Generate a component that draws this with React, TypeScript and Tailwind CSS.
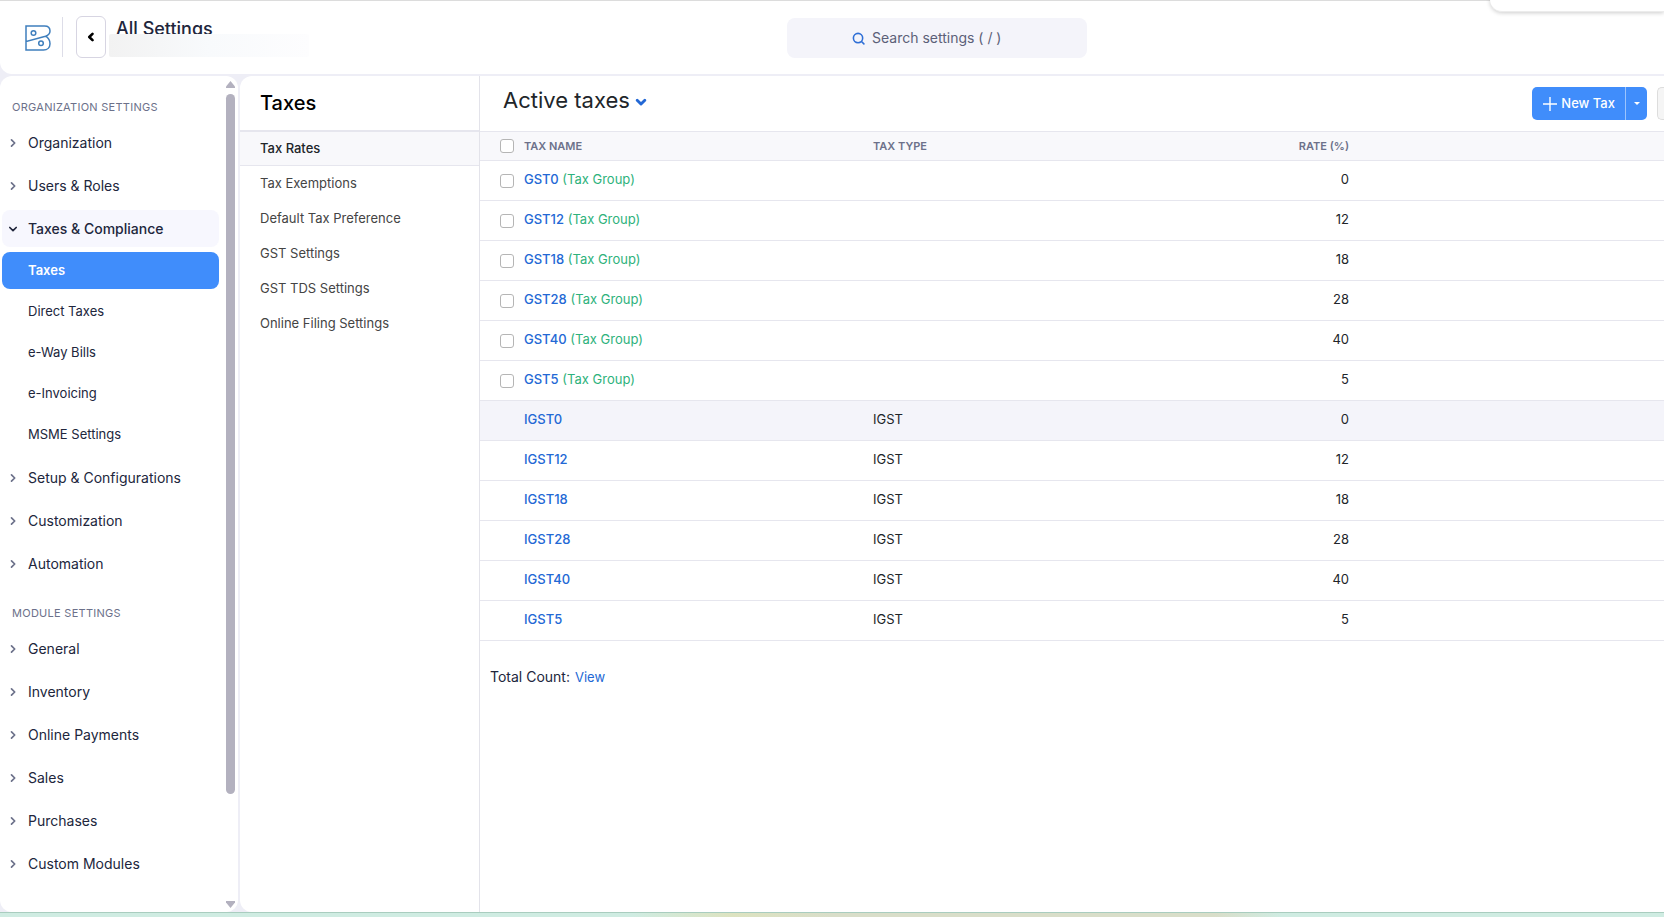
import { useState } from "react";
import clsx from "clsx";

type NavItem = { label: string; children?: string[] };

const orgSettings: NavItem[] = [
  { label: "Organization" },
  { label: "Users & Roles" },
  {
    label: "Taxes & Compliance",
    children: ["Taxes", "Direct Taxes", "e-Way Bills", "e-Invoicing", "MSME Settings"],
  },
  { label: "Setup & Configurations" },
  { label: "Customization" },
  { label: "Automation" },
];

const moduleSettings: NavItem[] = [
  { label: "General" },
  { label: "Inventory" },
  { label: "Online Payments" },
  { label: "Sales" },
  { label: "Purchases" },
  { label: "Custom Modules" },
];

const taxMenu = [
  "Tax Rates",
  "Tax Exemptions",
  "Default Tax Preference",
  "GST Settings",
  "GST TDS Settings",
  "Online Filing Settings",
];

const taxes = [
  { name: "GST0", group: true, rate: 0 },
  { name: "GST12", group: true, rate: 12 },
  { name: "GST18", group: true, rate: 18 },
  { name: "GST28", group: true, rate: 28 },
  { name: "GST40", group: true, rate: 40 },
  { name: "GST5", group: true, rate: 5 },
  { name: "IGST0", type: "IGST", rate: 0 },
  { name: "IGST12", type: "IGST", rate: 12 },
  { name: "IGST18", type: "IGST", rate: 18 },
  { name: "IGST28", type: "IGST", rate: 28 },
  { name: "IGST40", type: "IGST", rate: 40 },
  { name: "IGST5", type: "IGST", rate: 5 },
];

function Logo() {
  return (
    <svg viewBox="0 0 26 26" className="w-[26px] h-[26px]" fill="none" stroke="#3f7fbd" strokeWidth="1.5">
      <path d="M1 16V1h18.500c3.400 0 5.500 2.100 5.500 5 0 2.600-1.500 4.200-4.500 5.200L1 16.500V25h17.500c3.900 0 6.500-2.700 6.500-6.300 0-3.500-1.700-5.900-4.500-7.500" />
      <circle cx="8.500" cy="8" r="2.300" />
      <circle cx="16" cy="18.300" r="2.300" />
    </svg>
  );
}

function Chevron({ className, width = 1.6 }: { className?: string; width?: number }) {
  return (
    <svg
      viewBox="0 0 10 10"
      className={clsx("shrink-0", className)}
      fill="none"
      stroke="currentColor"
      strokeWidth={width}
      strokeLinecap="round"
      strokeLinejoin="round"
    >
      <path d="M3.500 1.800 6.700 5 3.500 8.200" />
    </svg>
  );
}

function Header() {
  return (
    <header className="relative flex h-[74px] shrink-0 items-start rounded-bl-xl border-t border-[#dcdcdc] bg-white">
      <a href="#" aria-label="Home" className="mt-6 ml-[25px]">
        <Logo />
      </a>
      <div className="ml-[11px] mt-4 h-10 w-px bg-[#dddde8]" />
      <button
        aria-label="Back"
        className="ml-[13px] mt-[15px] flex h-[42px] w-[30px] items-center justify-center rounded-md border border-[#d7d5e2] bg-white text-black"
      >
        <Chevron className="size-2.5 rotate-180" width={2.6} />
      </button>
      <div className="relative ml-[3px] mt-4 w-[200px]">
        <h1 className="pl-[7px] text-lg leading-6 font-medium text-[#21263c]">All Settings</h1>
        {/* organization name is hidden behind a plate */}
        <div className="absolute top-[17px] left-0 h-[23px] w-full rounded-xs bg-linear-to-r from-[#f2f2f2] via-[#f8fafc] to-[#fdfdfe]" />
      </div>
      <label className="mt-[17px] mr-[577px] ml-auto flex h-10 w-[300px] items-center justify-center gap-[7px] rounded-lg bg-[#f4f4fa]">
        <svg viewBox="0 0 14 14" className="size-[13px]" fill="none" stroke="#2f6fd6" strokeWidth="1.700" strokeLinecap="round">
          <circle cx="6.500" cy="6.500" r="5" />
          <path d="m10.500 10.500 2.300 2.300" />
        </svg>
        <input
          type="text"
          aria-label="Search settings"
          placeholder="Search settings ( / )"
          className="w-[150px] bg-transparent text-sm outline-none placeholder:text-[#5b6078]"
        />
      </label>
      <div className="absolute -top-1 right-0 h-[15px] w-[174px] rounded-bl-xl border-b border-[#ececec] bg-white shadow-[0_1px_4px_rgba(0,0,0,0.2)]" />
    </header>
  );
}

function NavGroup({ title, items }: { title: string; items: NavItem[] }) {
  return (
    <section>
      <h2 className="pl-2.5 text-[11px] leading-4 tracking-wide text-[#6c718a]">{title}</h2>
      <ul className="mt-[9px] flex flex-col gap-1.5">
        {items.map((item) => (
          <li key={item.label}>
            <button
              className={clsx(
                "flex h-[37px] w-full items-center gap-2.5 rounded-lg pl-1.5 text-left text-sm text-[#21263c]",
                item.children && "bg-[#f7f7fe] font-medium"
              )}
            >
              <Chevron
                className={clsx("size-2.5", item.children ? "rotate-90" : "text-[#6c718a]")}
                width={1.7}
              />
              {item.label}
            </button>
            {item.children && (
              <ul className="mt-[5px] flex flex-col gap-1">
                {item.children.map((child) => (
                  <li key={child}>
                    <a
                      href="#"
                      className={clsx(
                        "flex h-[37px] items-center rounded-lg pl-[26px] text-[13px]",
                        child === "Taxes" ? "bg-[#408dfb] font-semibold text-white" : "text-[#21263c]"
                      )}
                    >
                      {child}
                    </a>
                  </li>
                ))}
              </ul>
            )}
          </li>
        ))}
      </ul>
    </section>
  );
}

function Sidebar() {
  return (
    <aside className="flex w-[238px] shrink-0 rounded-xl bg-white">
      <nav className="ml-0.5 flex w-[217px] flex-col gap-[23px] overflow-hidden pt-[23px]">
        <NavGroup title="ORGANIZATION SETTINGS" items={orgSettings} />
        <NavGroup title="MODULE SETTINGS" items={moduleSettings} />
      </nav>
      <div className="ml-[7px] flex w-[9px] flex-col items-center pt-[5px] pb-1">
        <svg viewBox="0 0 9 7" className="h-[7px] w-[9px]" fill="#b3b1bf">
          <path d="M4.500 0 9 5.500V7H0V5.500z" />
        </svg>
        <div className="mt-1.5 mb-[107px] w-full flex-1 rounded-full bg-[#b3b1bf]" />
        <svg viewBox="0 0 9 7" className="h-[7px] w-[9px]" fill="#b3b1bf">
          <path d="M0 0h9v1.500L4.500 7 0 1.500z" />
        </svg>
      </div>
    </aside>
  );
}

function TaxMenu() {
  return (
    <nav className="ml-0.5 w-60 shrink-0 rounded-l-xl border-r border-[#e3e3ea] bg-white">
      <h2 className="flex h-[56px] items-center border-b-2 border-[#e6e6ee] pl-5 text-xl font-medium text-black">
        Taxes
      </h2>
      {taxMenu.map((label, i) => (
        <a
          key={label}
          href="#"
          className={clsx(
            "flex items-center pl-5 text-[13px]",
            i === 0
              ? "h-[34px] border-b border-[#e6e6ee] bg-[#f8f8fb] font-medium text-[#212529]"
              : "h-[35px] text-[#444]"
          )}
        >
          {label}
        </a>
      ))}
    </nav>
  );
}

const checkbox =
  "block size-3.5 appearance-none rounded-[3px] border border-[#b5b5b5] bg-white checked:border-[#408dfb] checked:bg-[#408dfb]";

function TaxTable() {
  const [selected, setSelected] = useState<string[]>([]);
  const groups = taxes.filter((t) => t.group).map((t) => t.name);

  const toggle = (name: string) =>
    setSelected((prev) => (prev.includes(name) ? prev.filter((n) => n !== name) : [...prev, name]));

  return (
    <table className="w-full table-fixed border-separate border-spacing-0 text-[13px] text-[#212529]">
      <thead>
        <tr className="h-[30px] bg-[#f8f8fb] text-[11px] text-[#6c718a] [&>th]:border-y [&>th]:border-[#e6e6ee] [&>th]:font-semibold">
          <th className="w-11 pl-5">
            <input
              type="checkbox"
              aria-label="Select all"
              className={checkbox}
              checked={selected.length === groups.length}
              onChange={() => setSelected(selected.length === groups.length ? [] : groups)}
            />
          </th>
          <th className="w-[349px] text-left">TAX NAME</th>
          <th className="text-left">TAX TYPE</th>
          <th className="w-[200px] text-right">RATE (%)</th>
          <th className="w-[315px]" />
        </tr>
      </thead>
      <tbody>
        {taxes.map((tax) => (
          <tr
            key={tax.name}
            className={clsx(
              "h-10 [&>td]:border-b [&>td]:border-[#e6e6ee] [&>td]:pb-0.5",
              tax.name === "IGST0" && "bg-[#f4f4fa]"
            )}
          >
            <td className="pt-0.5 pl-5">
              {tax.group && (
                <input
                  type="checkbox"
                  aria-label={tax.name}
                  className={checkbox}
                  checked={selected.includes(tax.name)}
                  onChange={() => toggle(tax.name)}
                />
              )}
            </td>
            <td>
              <a href="#" className="font-medium text-[#2368d5]">
                {tax.name}
              </a>
              {tax.group && <span className="text-[#2eb27c]"> (Tax Group)</span>}
            </td>
            <td>{tax.type}</td>
            <td className="text-right">{tax.rate}</td>
            <td />
          </tr>
        ))}
      </tbody>
    </table>
  );
}

export default function App() {
  return (
    <div className="flex h-screen flex-col overflow-hidden bg-[#eeeef6] font-['Inter',sans-serif]">
      <Header />
      <div className="mt-0.5 flex min-h-0 flex-1">
        <Sidebar />
        <TaxMenu />
        <main className="min-w-0 flex-1 overflow-hidden bg-white">
          <div className="flex h-[55px] items-start justify-between pl-[23px]">
            <button className="mt-2 flex items-center gap-[5px] text-[22px] leading-8 text-[#212529]">
              Active taxes
              <Chevron className="mt-1 size-3 rotate-90 text-[#2368d5]" width={2.4} />
            </button>
            <div className="mt-[11px] flex gap-2.5">
              <div className="flex h-[33px] overflow-hidden rounded-[5px] bg-[#408dfb] text-white">
                <button className="flex items-center gap-1 pr-2.5 pl-[11px] text-[13px] font-medium">
                  <svg viewBox="0 0 14 14" className="size-3.5" fill="none" stroke="currentColor" strokeWidth="1.400">
                    <path d="M7 0v14M0 7h14" />
                  </svg>
                  New Tax
                </button>
                <button aria-label="More tax actions" className="flex w-[22px] items-center justify-center border-l border-[#9cc4fd]">
                  <svg viewBox="0 0 6 3" className="h-[3px] w-1.5" fill="currentColor">
                    <path d="M0 0h6L3 3z" />
                  </svg>
                </button>
              </div>
              <button aria-label="Help" className="h-[33px] w-[7px] rounded-l-[5px] border border-r-0 border-[#ddd] bg-[#f5f5f5]" />
            </div>
          </div>
          <TaxTable />
          <p className="mt-[26px] flex items-center gap-[5px] pl-2.5 text-sm leading-5 text-[#21263c]">
            Total Count:
            <a href="#" className="text-[13px] text-[#2368d5]">
              View
            </a>
          </p>
        </main>
      </div>
      <div className="h-[5px] shrink-0 border-t border-[#a9cdbf] bg-[linear-gradient(to_right,#cfece2_38%,#dde3c0_44%,#d9dec9_50%,#d9dec9_73%,#cfece2_77%)]" />
    </div>
  );
}
